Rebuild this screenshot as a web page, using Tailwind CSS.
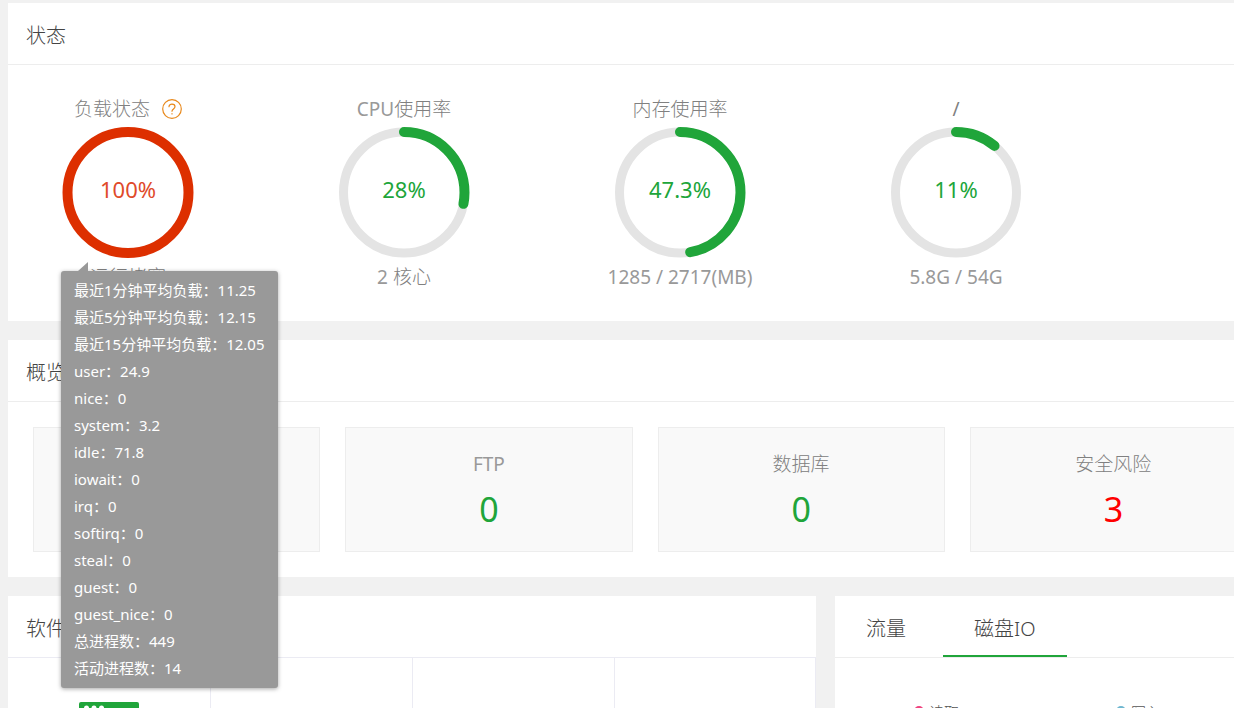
<!DOCTYPE html>
<html lang="zh-CN">
<head>
    <meta charset="UTF-8">
    <meta name="viewport" content="width=device-width, initial-scale=1.0">
    <title>面板首页</title>
    <script src="https://cdn.jsdelivr.net/npm/@tailwindcss/browser@4"></script>
</head>
<body class="h-screen overflow-hidden bg-[#f1f1f1] font-['Noto_Sans','Noto_Sans_CJK_SC',sans-serif] font-light text-[#444]">
    <main class="-mr-12 ml-2 flex flex-col gap-[19px] pt-[3px]">
        <!-- Status -->
        <section class="bg-white">
            <h2 class="border-b border-[#ededed] px-[18px] pt-[18px] pb-[14px] text-[20px] leading-[29px]">状态</h2>
            <div class="flex gap-[126px] pt-[29px] pb-[29px] pl-[45px] text-center text-[19px] leading-[30px] whitespace-nowrap text-[#808080]">
                <div class="relative w-[150px] shrink-0">
                    <h3 class="flex items-center justify-center gap-3 pb-[2px]">负载状态
                        <svg class="size-5" viewBox="0 0 20 20" fill="none" stroke="#e8891c" stroke-width="1.2" stroke-linecap="round">
                            <circle cx="10" cy="10" r="9.3"/>
                            <path d="M7 7.7c0-3.6 6-3.4 6 0 0 2.1-3 2.4-3 4.5"/>
                            <path d="M10 14.6v.3"/>
                        </svg>
                    </h3>
                    <div class="relative mx-auto grid size-[132px] place-items-center">
                        <svg class="absolute inset-0" viewBox="0 0 132 132" fill="none">
                            <circle cx="66" cy="66.5" r="60.5" stroke="#dd2f00" stroke-width="10"/>
                        </svg>
                        <span class="pb-[6px] text-[22px] font-normal text-[#e04a2a]">100%</span>
                    </div>
                    <p class="pt-1">运行堵塞</p>

                    <!-- Load tooltip -->
                    <div class="absolute top-[177px] left-2 z-10 rounded-[3px] bg-[#999] px-[13px] py-[6px] text-left text-[15px] leading-[27px] font-normal text-white shadow-[0_1px_4px_rgba(0,0,0,0.35)]">
                        <svg class="absolute -top-[9px] left-[17px] h-[9px] w-[10px]" viewBox="0 0 10 9" fill="#999"><path d="M10 0v9H0z"/></svg>
                        <p>最近1分钟平均负载：11.25</p>
                        <p>最近5分钟平均负载：12.15</p>
                        <p>最近15分钟平均负载：12.05</p>
                        <p>user：24.9</p>
                        <p>nice：0</p>
                        <p>system：3.2</p>
                        <p>idle：71.8</p>
                        <p>iowait：0</p>
                        <p>irq：0</p>
                        <p>softirq：0</p>
                        <p>steal：0</p>
                        <p>guest：0</p>
                        <p>guest_nice：0</p>
                        <p>总进程数：449</p>
                        <p>活动进程数：14</p>
                    </div>
                </div>
                <div class="w-[150px] shrink-0">
                    <h3 class="pb-[2px]"><span class="font-normal text-[#999]">CPU</span>使用率</h3>
                    <div class="relative mx-auto grid size-[132px] place-items-center">
                        <svg class="absolute inset-0 -rotate-90" viewBox="0 0 132 132" fill="none">
                            <circle cx="65.5" cy="66" r="60.5" stroke="#e4e4e4" stroke-width="9"/>
                            <circle cx="65.5" cy="66" r="60.5" stroke="#20a53a" stroke-width="10" stroke-linecap="round" pathLength="100" stroke-dasharray="28 100"/>
                        </svg>
                        <span class="pb-[6px] text-[22px] font-normal text-[#20a53a]">28%</span>
                    </div>
                    <p class="pt-1"><span class="font-normal text-[#999]">2</span> 核心</p>
                </div>
                <div class="w-[150px] shrink-0">
                    <h3 class="pb-[2px]">内存使用率</h3>
                    <div class="relative mx-auto grid size-[132px] place-items-center">
                        <svg class="absolute inset-0 -rotate-90" viewBox="0 0 132 132" fill="none">
                            <circle cx="65.5" cy="66" r="60.5" stroke="#e4e4e4" stroke-width="9"/>
                            <circle cx="65.5" cy="66" r="60.5" stroke="#20a53a" stroke-width="10" stroke-linecap="round" pathLength="100" stroke-dasharray="47.3 100"/>
                        </svg>
                        <span class="pb-[6px] text-[22px] font-normal text-[#20a53a]">47.3%</span>
                    </div>
                    <p class="pt-1 font-normal text-[#999]">1285 / 2717(MB)</p>
                </div>
                <div class="w-[150px] shrink-0">
                    <h3 class="pb-[2px] font-normal">/</h3>
                    <div class="relative mx-auto grid size-[132px] place-items-center">
                        <svg class="absolute inset-0 -rotate-90" viewBox="0 0 132 132" fill="none">
                            <circle cx="65.5" cy="66" r="60.5" stroke="#e4e4e4" stroke-width="9"/>
                            <circle cx="65.5" cy="66" r="60.5" stroke="#20a53a" stroke-width="10" stroke-linecap="round" pathLength="100" stroke-dasharray="11 100"/>
                        </svg>
                        <span class="pb-[6px] text-[22px] font-normal text-[#20a53a]">11%</span>
                    </div>
                    <p class="pt-1 font-normal text-[#999]">5.8G / 54G</p>
                </div>
            </div>
        </section>

        <!-- Overview -->
        <section class="bg-white">
            <h2 class="border-b border-[#ededed] px-[18px] pt-[18px] pb-[14px] text-[20px] leading-[29px]">概览</h2>
            <ul class="grid grid-cols-4 gap-[25px] p-[25px] text-center text-[19px] text-[#808080]">
                <li class="border border-[#ededed] bg-[#f9f9f9] pt-[21px] pb-3">
                    <p class="leading-[30px]">网站</p>
                    <a href="#" class="block text-[34px] leading-[60px] font-normal text-[#20a53a]">0</a>
                </li>
                <li class="border border-[#ededed] bg-[#f9f9f9] pt-[21px] pb-3">
                    <p class="leading-[30px] font-normal text-[#999]">FTP</p>
                    <a href="#" class="block text-[34px] leading-[60px] font-normal text-[#20a53a]">0</a>
                </li>
                <li class="border border-[#ededed] bg-[#f9f9f9] pt-[21px] pb-3">
                    <p class="leading-[30px]">数据库</p>
                    <a href="#" class="block text-[34px] leading-[60px] font-normal text-[#20a53a]">0</a>
                </li>
                <li class="border border-[#ededed] bg-[#f9f9f9] pt-[21px] pb-3">
                    <p class="leading-[30px]">安全风险</p>
                    <a href="#" class="block text-[34px] leading-[60px] font-normal text-[#f00]">3</a>
                </li>
            </ul>
        </section>

        <div class="grid grid-cols-[808fr_447fr] gap-[19px]">
            <!-- Software -->
            <section class="bg-white">
                <h2 class="border-b border-[#ebebf3] px-[18px] pt-[18px] pb-[14px] text-[20px] leading-[29px]">软件</h2>
                <div class="grid h-[200px] grid-cols-4">
                    <div class="flex justify-center pt-11">
                        <svg class="h-[60px] w-[60px]" viewBox="0 0 60 60">
                            <rect width="60" height="60" rx="2" fill="#20a53a"/>
                            <g fill="#fff"><circle cx="7.5" cy="6" r="2.5"/><circle cx="15" cy="6" r="2.5"/><circle cx="22.5" cy="6" r="2.5"/></g>
                            <path d="M4 12h52v44H4z" fill="#fff"/>
                        </svg>
                    </div>
                    <div class="border-l border-[#ebebf3]"></div>
                    <div class="border-l border-[#ebebf3]"></div>
                    <div class="border-x border-[#ebebf3]"></div>
                </div>
            </section>

            <!-- Traffic / disk IO -->
            <section class="bg-white">
                <div class="flex gap-[6px] border-b border-[#ededed] text-[20px] leading-[29px]">
                    <button type="button" class="px-[31px] pt-[18px] pb-[14px]">流量</button>
                    <button type="button" class="border-b-2 border-[#20a53a] px-[31px] pt-[18px] pb-3">磁盘IO</button>
                </div>
                <div class="flex gap-[157px] pt-11 pl-[79px] text-[15px] leading-5 text-[#555]">
                    <span class="flex items-start gap-[5px]"><i class="mt-1 size-[10px] rounded-full bg-[#f0437f]"></i>读取</span>
                    <span class="flex items-start gap-[5px]"><i class="mt-1 size-[10px] rounded-full bg-[#6fb7d0]"></i>写入</span>
                </div>
            </section>
        </div>
    </main>
</body>
</html>
